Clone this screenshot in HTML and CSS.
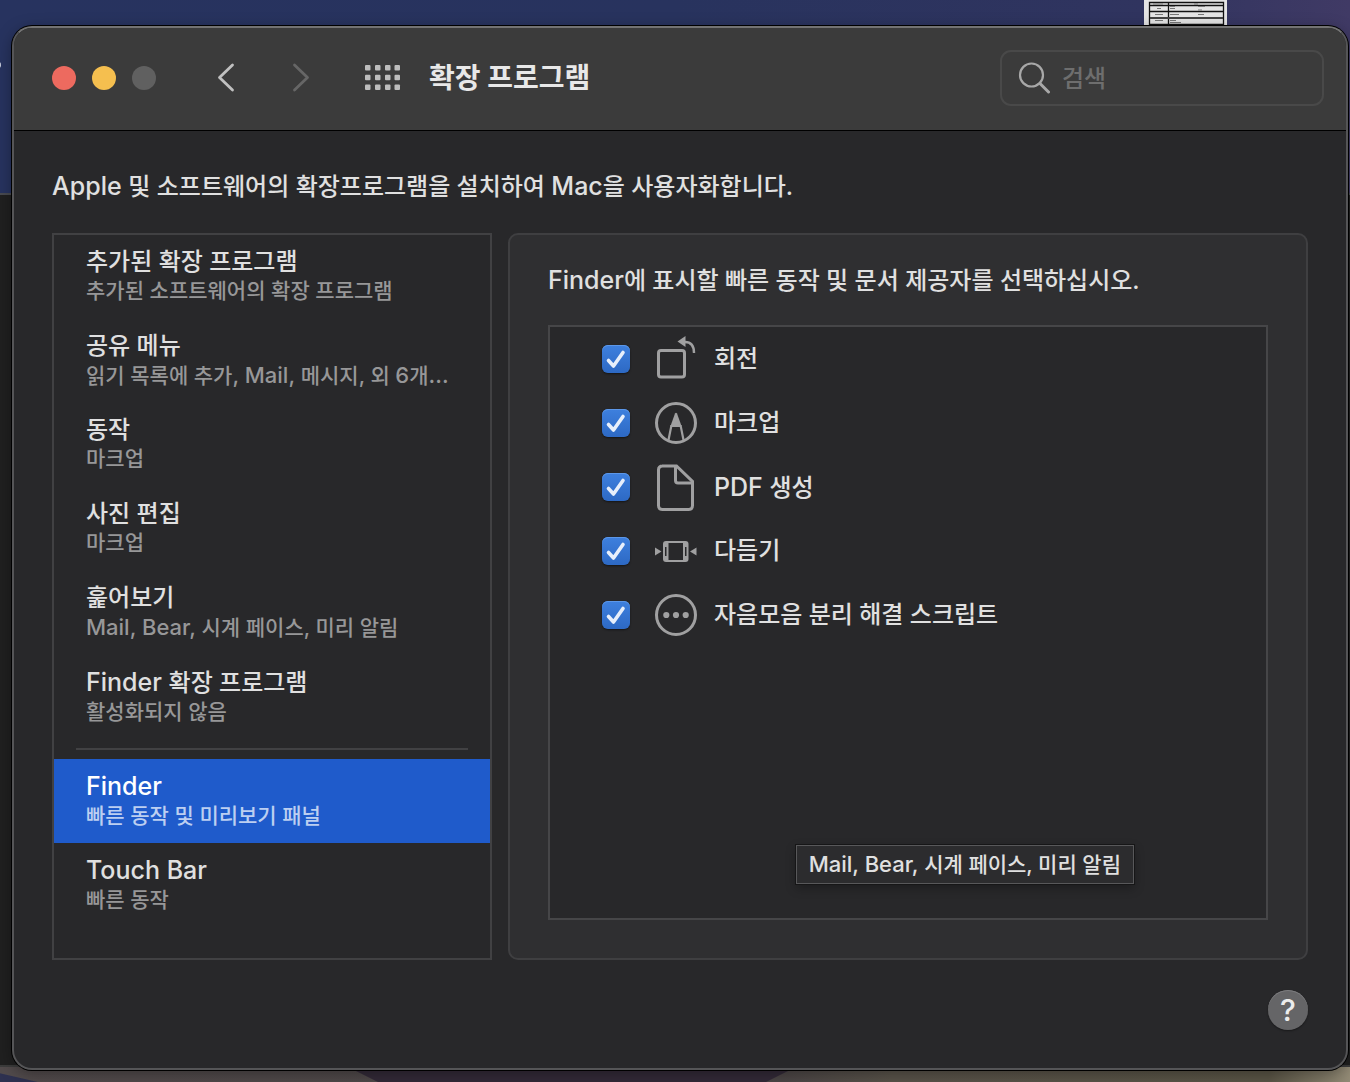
FILE: index.html
```html
<!DOCTYPE html>
<html lang="ko">
<head>
<meta charset="utf-8">
<title>확장 프로그램</title>
<meta name="viewport" content="width=device-width, initial-scale=1">
<link rel="stylesheet" href="styles.css">
</head>
<body>
<div class="desktop">
  <div class="hill"></div>
  <div class="back-window"></div>
  <div class="icon-label-edge"></div>
  <svg class="file-thumb" viewBox="0 0 83 26" aria-hidden="true">
    <path d="M0 0h83v26H0z" fill="#e4e4e4"/>
    <path d="M5.500 2.500h74v23h-74zM24.500 2v24M5 5.500h75M5 11.500h75M5 18h75M5 24.500h75" fill="none" stroke="#111" stroke-width="1.300"/>
    <path d="M6 18h73" stroke="#444" stroke-width="2"/>
    <path d="M9 4h10M50 4h4M13 8.500h4M26 6.500h5M26 8.500h5M54 6.500h7M54 10h4M11 14.500h8M26 14.500h9M54 14.500h6M11 20.500h8M26 20.500h6M26 22.500h11" stroke="#777" stroke-width="1"/>
  </svg>

  <div class="window">
    <header class="toolbar">
      <div class="lights">
        <button class="light light-close" aria-label="닫기"></button>
        <button class="light light-min" aria-label="최소화"></button>
        <button class="light light-zoom" aria-label="확대" disabled></button>
      </div>
      <button class="tool tool-back" aria-label="뒤로">
        <svg width="18" height="30" viewBox="0 0 18 30"><path d="M15.500 2 2.500 14.500l13 12.500" fill="none" stroke="#c0c0c0" stroke-width="2.800" stroke-linecap="round" stroke-linejoin="round"/></svg>
      </button>
      <button class="tool tool-forward" aria-label="앞으로" disabled>
        <svg width="18" height="30" viewBox="0 0 18 30"><path d="m2.500 2 13 12.500-13 12.500" fill="none" stroke="#666" stroke-width="2.800" stroke-linecap="round" stroke-linejoin="round"/></svg>
      </button>
      <button class="tool tool-grid" aria-label="모두 보기">
        <svg width="36" height="26" viewBox="0 0 36 26" fill="#bdbdbd">
          <rect x="0" y="0" width="5.500" height="5.500" rx="1"/><rect x="10" y="0" width="5.500" height="5.500" rx="1"/><rect x="20" y="0" width="5.500" height="5.500" rx="1"/><rect x="29.500" y="0" width="5.500" height="5.500" rx="1"/>
          <rect x="0" y="9.700" width="5.500" height="5.500" rx="1"/><rect x="10" y="9.700" width="5.500" height="5.500" rx="1"/><rect x="20" y="9.700" width="5.500" height="5.500" rx="1"/><rect x="29.500" y="9.700" width="5.500" height="5.500" rx="1"/>
          <rect x="0" y="19.500" width="5.500" height="5.500" rx="1"/><rect x="10" y="19.500" width="5.500" height="5.500" rx="1"/><rect x="20" y="19.500" width="5.500" height="5.500" rx="1"/><rect x="29.500" y="19.500" width="5.500" height="5.500" rx="1"/>
        </svg>
      </button>
      <h1 class="title">확장 프로그램</h1>
      <label class="search">
        <svg width="32" height="32" viewBox="0 0 32 32" fill="none" stroke="#a8a8a8"><circle cx="13.500" cy="13" r="11.500" stroke-width="2.200"/><path d="m22 21.500 8.500 8.500" stroke-width="3" stroke-linecap="round"/></svg>
        <input class="search-input" type="search" placeholder="검색" aria-label="검색">
      </label>
    </header>

    <main class="content">
      <p class="intro"><span class="latin">Apple </span>및 소프트웨어의 확장프로그램을 설치하여 <span class="latin">Mac</span>을 사용자화합니다.</p>
      <div class="columns">
        <nav class="sidebar" aria-label="확장 프로그램 종류">
          <button class="item"><span class="item-title">추가된 확장 프로그램</span><span class="item-sub">추가된 소프트웨어의 확장 프로그램</span></button>
          <button class="item"><span class="item-title">공유 메뉴</span><span class="item-sub">읽기 목록에 추가<span class="latin-small">, Mail, </span>메시지, 외 <span class="latin-small">6</span>개<span class="latin-small">...</span></span></button>
          <button class="item"><span class="item-title">동작</span><span class="item-sub">마크업</span></button>
          <button class="item"><span class="item-title">사진 편집</span><span class="item-sub">마크업</span></button>
          <button class="item"><span class="item-title">훑어보기</span><span class="item-sub"><span class="latin-small">Mail, Bear, </span>시계 페이스, 미리 알림</span></button>
          <button class="item"><span class="item-title"><span class="latin">Finder </span>확장 프로그램</span><span class="item-sub">활성화되지 않음</span></button>
          <hr class="divider">
          <button class="item item-selected" aria-current="true"><span class="item-title"><span class="latin">Finder</span></span><span class="item-sub">빠른 동작 및 미리보기 패널</span></button>
          <button class="item"><span class="item-title"><span class="latin">Touch Bar</span></span><span class="item-sub">빠른 동작</span></button>
        </nav>

        <section class="panel">
          <h2 class="panel-title"><span class="latin">Finder</span>에 표시할 빠른 동작 및 문서 제공자를 선택하십시오.</h2>
          <div class="actions">
            <label class="action">
              <span class="check"><input class="check-box" type="checkbox" checked><svg class="check-mark" viewBox="0 0 28 28"><path d="m6.500 15.500 5 5.500L21 7.500"/></svg></span>
              <svg class="glyph" viewBox="0 0 44 48"><rect x="4.500" y="15.500" width="26" height="26.500" rx="2.500"/><path d="M31 7c6 0 9 3.500 9 11" stroke-width="2.400"/><path class="solid" d="m23.500 6.500 8-5.500v11z"/></svg>
              <span class="action-name">회전</span>
            </label>
            <label class="action">
              <span class="check"><input class="check-box" type="checkbox" checked><svg class="check-mark" viewBox="0 0 28 28"><path d="m6.500 15.500 5 5.500L21 7.500"/></svg></span>
              <svg class="glyph" viewBox="0 0 44 48"><circle cx="22" cy="24" r="19.500"/><path d="m14.500 41 2.800-14h9.400l2.800 14" stroke-width="2.200"/><path class="solid" d="M21 14.500q1-1.500 2 0l4.500 12.500h-11z"/></svg>
              <span class="action-name">마크업</span>
            </label>
            <label class="action">
              <span class="check"><input class="check-box" type="checkbox" checked><svg class="check-mark" viewBox="0 0 28 28"><path d="m6.500 15.500 5 5.500L21 7.500"/></svg></span>
              <svg class="glyph" viewBox="0 0 44 48"><path d="M8 3h14.500L38.500 18.500v24q0 4-4 4H8.500q-4 0-4-4V7q0-4 4-4z"/><path d="M21.500 4v13.500q0 2.500 2.500 2.500h14"/></svg>
              <span class="action-name"><span class="latin">PDF </span>생성</span>
            </label>
            <label class="action">
              <span class="check"><input class="check-box" type="checkbox" checked><svg class="check-mark" viewBox="0 0 28 28"><path d="m6.500 15.500 5 5.500L21 7.500"/></svg></span>
              <svg class="glyph" viewBox="0 0 44 48"><path class="solid" d="M1 20.500v8l6.500-4zM42.500 20.500v8l-6.500-4z"/><rect class="solid" x="9" y="14" width="25.500" height="21" rx="3"/><path fill="#28282a" stroke="none" d="M14.500 16H29v17H14.500zM11 20h1.500v9H11zM31 20h1.500v9H31z"/></svg>
              <span class="action-name">다듬기</span>
            </label>
            <label class="action">
              <span class="check"><input class="check-box" type="checkbox" checked><svg class="check-mark" viewBox="0 0 28 28"><path d="m6.500 15.500 5 5.500L21 7.500"/></svg></span>
              <svg class="glyph" viewBox="0 0 44 48"><circle cx="22" cy="24" r="19.500"/><g class="solid"><circle cx="12.300" cy="24" r="3.100"/><circle cx="22" cy="24" r="3.100"/><circle cx="31.700" cy="24" r="3.100"/></g></svg>
              <span class="action-name">자음모음 분리 해결 스크립트</span>
            </label>
            <div class="tooltip" role="tooltip"><span class="latin-small">Mail, Bear, </span>시계 페이스, 미리 알림</div>
          </div>
        </section>
      </div>
      <footer class="footer"><button class="help" aria-label="도움말">?</button></footer>
    </main>
  </div>
</div>
</body>
</html>
```
FILE: styles.css
```css
* { box-sizing: border-box; }

body {
  margin: 0;
  font-family: Inter, "Noto Sans CJK KR", sans-serif;
  font-size: 24px;
  font-weight: 500;
  color: #e0e0e0;
}

button, input { font: inherit; color: inherit; }
button { border: 0; padding: 0; background: none; }
svg { display: block; flex: none; }

/* Latin letters run slightly larger than the Hangul beside them */
.latin { font-size: 25px; }
.latin-small { font-size: 22px; }

.desktop {
  position: relative;
  display: flex;
  min-height: 100vh;
  padding: 26px 2px 12px 12px;
  overflow: hidden;
  background:
    linear-gradient(13deg, #2e3150 0 8px, transparent 9px) 0 100% / 40px 14px no-repeat,
    linear-gradient(90deg, #524b4c 0, #4c4646 58%, #59534a 66%, #5a5546 94%, #938b76 100%) 0 100% / 100% 20px no-repeat,
    linear-gradient(90deg, #27335f 0, #28335e 50%, #30345f 85%, #403a65 100%);
}

.hill {
  position: absolute;
  left: 354px;
  bottom: 0;
  width: 436px;
  height: 12px;
  background: #332a38;
  clip-path: polygon(0 0, 100% 0, 412px 100%, 24px 100%);
}

.back-window {
  position: absolute;
  inset: 193px 0 15px;
  background: #202020;
  border-top: 2px solid #484a50;
  border-bottom: 2px solid #3c3c3c;
}

.icon-label-edge {
  position: absolute;
  left: -4px;
  top: 62px;
  width: 5px;
  height: 6px;
  border-radius: 3px;
  background: #c3c8d8;
}

.file-thumb {
  position: absolute;
  top: 0;
  right: 123px;
  width: 83px;
  height: 26px;
}

.window {
  position: relative;
  flex: 1;
  display: flex;
  flex-direction: column;
  min-width: 0;
  border: 2px solid #555557;
  border-top-color: #737373;
  border-radius: 20px;
  background: #28282a;
  box-shadow: 0 0 0 1px #000, 0 4px 16px rgba(0, 0, 0, .35);
  overflow: hidden;
}

.toolbar {
  display: flex;
  align-items: center;
  height: 103px;
  padding: 0 22px 2px 38px;
  background: #3b3b3b;
  border-bottom: 1px solid #000;
}

.lights { display: flex; gap: 16px; }
.light { width: 24px; height: 24px; border-radius: 50%; }
.light-close { background: #ed6a5f; }
.light-min { background: #f5bf4f; }
.light-zoom { background: #606060; }

.tool-back { margin-left: 61px; }
.tool-forward { margin-left: 57px; }
.tool-grid { margin-left: 55px; }

.title {
  margin: 0 0 0 28px;
  font-size: 28px;
  line-height: 40px;
  font-weight: 700;
  color: #e8e8e8;
  white-space: nowrap;
}

.search {
  display: flex;
  align-items: center;
  gap: 12px;
  width: 324px;
  height: 56px;
  margin-left: auto;
  padding: 0 16px;
  border: 2px solid #494949;
  border-radius: 11px;
}

.search-input {
  flex: 1;
  min-width: 0;
  padding: 0;
  border: 0;
  outline: 0;
  background: none;
}
.search-input::placeholder { color: #6e6e6e; opacity: 1; }

.content {
  flex: 1;
  display: flex;
  flex-direction: column;
  padding: 37px 38px 38px;
}

.intro { margin: 0 0 28px; line-height: 36px; }

.columns {
  flex: 1;
  display: grid;
  grid-template-columns: 440px 1fr;
  gap: 16px;
}

.sidebar {
  display: flex;
  flex-direction: column;
  border: 2px solid #414143;
}

.item {
  display: flex;
  flex-direction: column;
  height: 84px;
  padding: 12px 32px 0;
  text-align: left;
  white-space: nowrap;
}
.item-title { line-height: 30px; }
.item-sub { font-size: 21px; line-height: 28px; color: #979798; }
.item-selected { background: #1f5bcb; color: #fff; }
.item-selected .item-sub { color: #bccff1; }

.divider {
  width: calc(100% - 44px);
  height: 2px;
  margin: 9px 22px;
  border: 0;
  background: #414143;
}

.panel {
  display: flex;
  flex-direction: column;
  padding: 27px 38px 38px;
  border: 2px solid #3f3f41;
  border-radius: 10px;
  background: #2f2f31;
}
.panel-title {
  height: 36px;
  margin: 0 0 27px;
  font-size: 24px;
  line-height: 36px;
  font-weight: 500;
}

.actions {
  position: relative;
  flex: 1;
  border: 2px solid #464648;
  background: #28282a;
}

.action {
  display: flex;
  align-items: center;
  height: 64px;
  padding-left: 52px;
}
.action-name { line-height: 32px; }

.check { display: grid; width: 28px; height: 28px; }
.check-box, .check-mark { grid-area: 1 / 1; width: 28px; height: 28px; }
.check-box {
  appearance: none;
  margin: 0;
  border-radius: 6px;
  background: linear-gradient(#3e80de, #2d69c4);
  box-shadow: inset 0 1px 0 #5c97e8, 0 1px 2px rgba(0, 0, 0, .5);
}
.check-mark {
  pointer-events: none;
  fill: none;
  stroke: #e7effb;
  stroke-width: 3.6;
  stroke-linecap: round;
  stroke-linejoin: round;
}
.check-box:not(:checked) + .check-mark { visibility: hidden; }

.glyph {
  width: 44px;
  height: 48px;
  margin: 0 16px 0 24px;
  fill: none;
  stroke: #a0a0a1;
  stroke-width: 3;
}
.solid { fill: #a0a0a1; stroke: none; }

.tooltip {
  position: absolute;
  right: 132px;
  bottom: 34px;
  padding: 0 12px;
  border: 1px solid #58585a;
  background: #2c2c2e;
  box-shadow: 0 0 0 1px #161617, 0 4px 10px rgba(0, 0, 0, .3);
  font-size: 21px;
  line-height: 36px;
  white-space: nowrap;
}

.footer { display: flex; justify-content: flex-end; margin-top: 30px; }
.help {
  width: 40px;
  height: 40px;
  border-radius: 50%;
  background: #656567;
  box-shadow: inset 0 1px 0 #7c7c7e, 0 1px 2px rgba(0, 0, 0, .4);
  font-size: 30px;
  line-height: 40px;
  color: #ececec;
}
```
